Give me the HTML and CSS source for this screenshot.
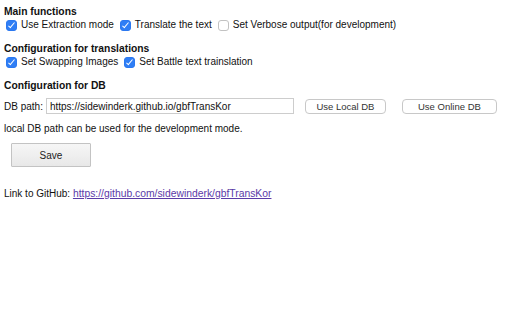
FILE: index.html
```html
<!DOCTYPE html>
<html lang="en">
<head>
    <meta charset="UTF-8">
    <title>Options</title>
    <link rel="stylesheet" href="styles.css">
</head>
<body>
    <div class="section">
        <div class="title">Main functions</div>
        <div class="options">
            <label><input type="checkbox" checked> Use Extraction mode</label>
            <label><input type="checkbox" checked> Translate the text</label>
            <label><input type="checkbox"> Set Verbose output(for development)</label>
        </div>
    </div>

    <div class="section">
        <div class="title">Configuration for translations</div>
        <div class="options">
            <label><input type="checkbox" checked> Set Swapping Images</label>
            <label><input type="checkbox" checked> Set Battle text trainslation</label>
        </div>
    </div>

    <div class="section">
        <div class="title">Configuration for DB</div>
        <div class="db-row">
            <span>DB path:</span>
            <input type="text" class="db-path" value="https://sidewinderk.github.io/gbfTransKor">
            <button class="db-btn local">Use Local DB</button>
            <button class="db-btn online">Use Online DB</button>
        </div>
        <p class="note">local DB path can be used for the development mode.</p>
    </div>

    <button class="save">Save</button>

    <p class="link">Link to GitHub: <a href="https://github.com/sidewinderk/gbfTransKor">https://github.com/sidewinderk/gbfTransKor</a></p>
</body>
</html>
```

FILE: styles.css
```css
body {
    margin: 0;
    padding: 5px 4px;
    font-family: 'Liberation Sans', Arial, sans-serif;
    font-size: 10px;
    color: #111;
    background-color: #fff;
}

.section {
    margin-bottom: 10px;
}

.title {
    font-weight: bold;
    font-size: 10.3px;
    line-height: 13px;
}

.options {
    display: flex;
    gap: 4px;
    line-height: 14px;
}

.options label {
    display: flex;
    align-items: center;
    gap: 4px;
}

/* mac style checkbox */
.options input {
    appearance: none;
    position: relative;
    box-sizing: border-box;
    width: 11px;
    height: 11px;
    margin: 0 0 0 2px;
    border: 1px solid #c2c2c2;
    border-radius: 3px;
    background-color: #fff;
}

.options input:checked {
    border-color: #2b78f0;
    background-color: #2f7ef5;
}

.options input:checked::after {
    content: "";
    position: absolute;
    left: 3px;
    top: 0;
    width: 2px;
    height: 6px;
    border: solid #fff;
    border-width: 0 1.5px 1.5px 0;
    transform: rotate(40deg);
}

.db-row {
    display: flex;
    align-items: center;
    height: 16px;
    margin-top: 6px;
}

.db-path {
    width: 248px;
    height: 16px;
    box-sizing: border-box;
    margin: 0 0 0 3px;
    padding: 0 3px;
    border: 1px solid #cdcdcd;
    font-family: 'Liberation Sans', Arial, sans-serif;
    font-size: 10px;
    color: #111;
}

.db-btn {
    height: 15px;
    padding: 0;
    background-color: #fff;
    border: 1px solid #c8c8c8;
    border-radius: 4px;
    font-family: 'Liberation Sans', Arial, sans-serif;
    font-size: 9.5px;
    color: #333;
}

.local {
    width: 81px;
    margin-left: 11px;
}

.online {
    width: 95px;
    margin-left: 16px;
}

.note {
    margin: 8px 0 0;
    line-height: 13px;
}

.save {
    display: block;
    width: 80px;
    height: 24px;
    margin: -2px 0 0 7px;
    background: linear-gradient(#f6f6f6, #e8e8e8);
    border: 1px solid #c3c3c3;
    border-radius: 1px;
    font-family: 'Liberation Sans', Arial, sans-serif;
    font-size: 10px;
    color: #222;
}

.link {
    margin: 20px 0 0;
    line-height: 13px;
}

.link a {
    font-size: 10.35px;
    color: #5b3aa8;
}
```
